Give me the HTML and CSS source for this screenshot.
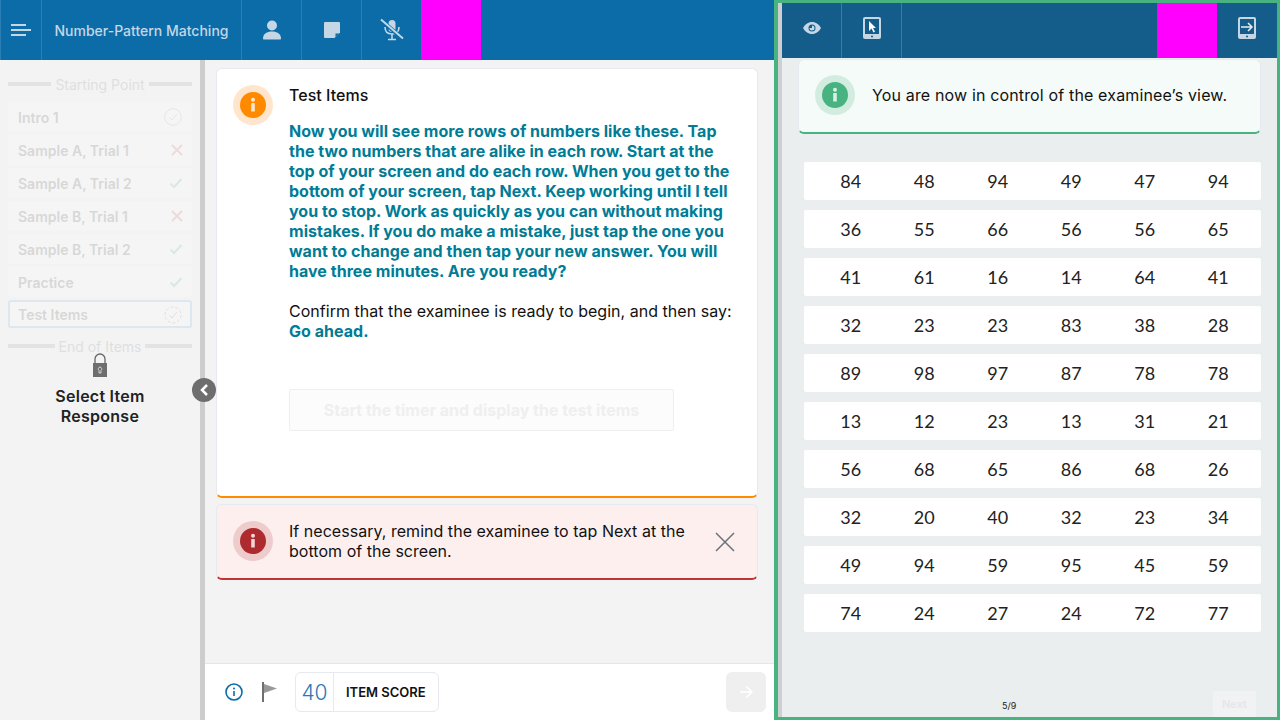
FILE: index.html
```html
<!DOCTYPE html>
<html lang="en">
<head>
  <meta charset="UTF-8">
  <title>Number-Pattern Matching</title>
  <link rel="stylesheet" href="styles.css">
</head>
<body>
  <div class="app">
    <section class="left-pane">
      <header class="topbar">
        <div class="bar-cell menu-cell">
          <svg width="22" height="14" viewBox="0 0 22 14"><path d="M1 2h15M1 7h20M1 12h15" stroke="#c5d6e4" stroke-width="2" fill="none"/></svg>
        </div>
        <div class="bar-cell title-cell">Number-Pattern Matching</div>
        <div class="bar-cell icon-cell">
          <svg width="20" height="20" viewBox="0 0 20 20"><circle cx="10" cy="5.500" r="5" fill="#c5d6e4"/><path d="M1 18.500c0-4.500 4-7 9-7s9 2.500 9 7c0 .6-.4 1-1 1H2c-.6 0-1-.4-1-1z" fill="#c5d6e4"/></svg>
        </div>
        <div class="bar-cell icon-cell">
          <svg width="16" height="16" viewBox="0 0 16 16"><path d="M1 0h14a1 1 0 0 1 1 1v9.500L10.500 16H1a1 1 0 0 1-1-1V1a1 1 0 0 1 1-1z" fill="#c5d6e4"/><path d="M11.500 15v-3.500H15z" fill="#0b6ca8"/></svg>
        </div>
        <div class="bar-cell icon-cell">
          <svg width="26" height="24" viewBox="0 0 26 24"><rect x="9.500" y="2" width="7" height="12" rx="3.500" fill="#c5d6e4"/><path d="M6 9c0 5 3 7 7 7s7-2 7-7M13 16v5M9 21.500h8" stroke="#c5d6e4" stroke-width="1.600" fill="none"/><path d="M2 2l22 19" stroke="#0b6ca8" stroke-width="4"/><path d="M2 1.500l22 19" stroke="#c5d6e4" stroke-width="2"/></svg>
        </div>
        <div class="magenta"></div>
      </header>

      <div class="left-body">
        <aside class="sidebar">
          <div class="items-faded">
            <div class="divider"><span>Starting Point</span></div>
            <div class="item"><span>Intro 1</span>
              <svg width="18" height="18" viewBox="0 0 18 18"><circle cx="9" cy="9" r="8.300" fill="none" stroke="#bbb"/><path d="M5.500 9.500l2.500 2.500 5-6" fill="none" stroke="#bbb"/></svg>
            </div>
            <div class="item"><span>Sample A, Trial 1</span>
              <svg class="mark" width="12" height="12" viewBox="0 0 12 12"><path d="M1 1l10 10M11 1L1 11" stroke="#d98b8b" stroke-width="2"/></svg>
            </div>
            <div class="item"><span>Sample A, Trial 2</span>
              <svg class="mark" width="14" height="12" viewBox="0 0 14 12"><path d="M1.500 6.500l3.500 3.500 7.500-8" fill="none" stroke="#7fc9a8" stroke-width="2"/></svg>
            </div>
            <div class="item"><span>Sample B, Trial 1</span>
              <svg class="mark" width="12" height="12" viewBox="0 0 12 12"><path d="M1 1l10 10M11 1L1 11" stroke="#d98b8b" stroke-width="2"/></svg>
            </div>
            <div class="item"><span>Sample B, Trial 2</span>
              <svg class="mark" width="14" height="12" viewBox="0 0 14 12"><path d="M1.500 6.500l3.500 3.500 7.500-8" fill="none" stroke="#7fc9a8" stroke-width="2"/></svg>
            </div>
            <div class="item"><span>Practice</span>
              <svg class="mark" width="14" height="12" viewBox="0 0 14 12"><path d="M1.500 6.500l3.500 3.500 7.500-8" fill="none" stroke="#7fc9a8" stroke-width="2"/></svg>
            </div>
            <div class="item item-current"><span>Test Items</span>
              <svg width="18" height="18" viewBox="0 0 18 18"><circle cx="9" cy="9" r="8" fill="none" stroke="#999" stroke-dasharray="3 2"/><path d="M5.500 9.500l2.500 2.500 5-6" fill="none" stroke="#999"/></svg>
            </div>
            <div class="divider divider-end"><span>End of Items</span></div>
          </div>
          <div class="lock-block">
            <svg width="16" height="24" viewBox="0 0 16 24"><path d="M3 11V6a5 5 0 0 1 10 0v5" fill="none" stroke="#666" stroke-width="1.300"/><rect x="1" y="10" width="14" height="14" fill="#6e6e6e"/><path d="M8 14a2 2 0 0 1 1 3.500V20H7v-2.500A2 2 0 0 1 8 14z" fill="none" stroke="#eee" stroke-width=".8"/></svg>
            <div class="lock-label">Select Item<br>Response</div>
          </div>
        </aside>
        <div class="splitter">
          <button class="collapse">
            <svg width="10" height="14" viewBox="0 0 10 14"><path d="M8 2L3 7l5 5" fill="none" stroke="#fff" stroke-width="2.500"/></svg>
          </button>
        </div>

        <main class="content">
          <div class="scroll-area">
            <article class="card card-main">
              <div class="badge badge-orange">
                <svg width="26" height="26" viewBox="0 0 26 26"><circle cx="13" cy="13" r="13" fill="#ff8a00"/><circle cx="13" cy="7.800" r="2" fill="#ffe5cc"/><rect x="11.200" y="11" width="3.600" height="8.500" rx=".6" fill="#ffe5cc"/></svg>
              </div>
              <div class="card-text">
                <h3 class="card-title">Test Items</h3>
                <p class="say">Now you will see more rows of numbers like these. Tap the two numbers that are alike in each row. Start at the top of your screen and do each row. When you get to the bottom of your screen, tap Next. Keep working until I tell you to stop. Work as quickly as you can without making mistakes. If you do make a mistake, just tap the one you want to change and then tap your new answer. You will have three minutes. Are you ready?</p>
                <p class="note">Confirm that the examinee is ready to begin, and then say:<br><strong class="say">Go ahead.</strong></p>
                <button class="start-btn">Start the timer and display the test items</button>
              </div>
            </article>
            <article class="card card-alert">
              <div class="badge badge-red">
                <svg width="26" height="26" viewBox="0 0 26 26"><circle cx="13" cy="13" r="13" fill="#ad2b2f"/><circle cx="13" cy="7.800" r="2" fill="#f3d5d5"/><rect x="11.200" y="11" width="3.600" height="8.500" rx=".6" fill="#f3d5d5"/></svg>
              </div>
              <p class="alert-text">If necessary, remind the examinee to tap Next at the bottom of the screen.</p>
              <svg class="close" width="20" height="20" viewBox="0 0 20 20"><path d="M1 1l18 18M19 1L1 19" stroke="#67727a" stroke-width="1.500"/></svg>
            </article>
          </div>
          <footer class="score-bar">
            <svg width="18" height="18" viewBox="0 0 18 18"><circle cx="9" cy="9" r="8" fill="none" stroke="#0b6ca8" stroke-width="1.600"/><path d="M9 8v5" stroke="#0b6ca8" stroke-width="1.600"/><circle cx="9" cy="5.500" r="1" fill="#0b6ca8"/></svg>
            <svg class="flag" width="16" height="20" viewBox="0 0 16 20"><path d="M1 0v20" stroke="#6f6f6f" stroke-width="2"/><path d="M2 2l13 4.500L2 11z" fill="#999"/></svg>
            <div class="score-box"><span class="score-num">40</span><span class="score-label">ITEM SCORE</span></div>
            <button class="next-arrow">
              <svg width="14" height="14" viewBox="0 0 14 14"><path d="M1 7h12M7.500 1.500L13 7l-5.500 5.500" fill="none" stroke="#fff" stroke-width="1.500"/></svg>
            </button>
          </footer>
        </main>
      </div>
    </section>

    <section class="right-pane">
      <header class="topbar topbar-dark">
        <div class="bar-cell dark-cell">
          <svg width="18" height="12" viewBox="0 0 18 12"><path d="M0 6c2-3.500 5-6 9-6s7 2.500 9 6c-2 3.500-5 6-9 6S2 9.500 0 6z" fill="#c5d6e4"/><circle cx="9" cy="6" r="3.500" fill="#145c8a"/><path d="M9 3.500A2.500 2.500 0 1 1 6.500 6H9z" fill="#c5d6e4"/></svg>
        </div>
        <div class="bar-cell dark-cell">
          <svg width="18" height="22" viewBox="0 0 18 22"><rect width="18" height="22" rx="2" fill="#c5d6e4"/><rect x="2" y="2" width="14" height="15" fill="#145c8a"/><path d="M6 4v10l2.500-2.500 2 4 1.500-.8-2-3.700H13z" fill="#fff"/><circle cx="9" cy="19.500" r="1" fill="#145c8a"/></svg>
        </div>
        <div class="bar-spacer"></div>
        <div class="magenta"></div>
        <div class="bar-cell dark-cell icon-last">
          <svg width="18" height="22" viewBox="0 0 18 22"><rect width="18" height="22" rx="2" fill="#c5d6e4"/><rect x="2" y="2" width="14" height="15" fill="#145c8a"/><path d="M3 10h11M10 6l4 4-4 4" fill="none" stroke="#e8eef3" stroke-width="1.500"/><circle cx="9" cy="19.500" r="1" fill="#145c8a"/></svg>
        </div>
      </header>

      <div class="examinee">
        <article class="card card-control">
          <div class="badge badge-green">
            <svg width="26" height="26" viewBox="0 0 26 26"><circle cx="13" cy="13" r="13" fill="#48b281"/><circle cx="13" cy="7.800" r="2" fill="#d9f0e5"/><rect x="11.200" y="11" width="3.600" height="8.500" rx=".6" fill="#d9f0e5"/></svg>
          </div>
          <p class="control-text">You are now in control of the examinee’s view.</p>
        </article>

        <div class="rows">
          <div class="row"><span>84</span><span>48</span><span>94</span><span>49</span><span>47</span><span>94</span></div>
          <div class="row"><span>36</span><span>55</span><span>66</span><span>56</span><span>56</span><span>65</span></div>
          <div class="row"><span>41</span><span>61</span><span>16</span><span>14</span><span>64</span><span>41</span></div>
          <div class="row"><span>32</span><span>23</span><span>23</span><span>83</span><span>38</span><span>28</span></div>
          <div class="row"><span>89</span><span>98</span><span>97</span><span>87</span><span>78</span><span>78</span></div>
          <div class="row"><span>13</span><span>12</span><span>23</span><span>13</span><span>31</span><span>21</span></div>
          <div class="row"><span>56</span><span>68</span><span>65</span><span>86</span><span>68</span><span>26</span></div>
          <div class="row"><span>32</span><span>20</span><span>40</span><span>32</span><span>23</span><span>34</span></div>
          <div class="row"><span>49</span><span>94</span><span>59</span><span>95</span><span>45</span><span>59</span></div>
          <div class="row"><span>74</span><span>24</span><span>27</span><span>24</span><span>72</span><span>77</span></div>
        </div>

        <div class="page-foot">
          <span class="page-count">5/9</span>
          <button class="next-btn">Next</button>
        </div>
      </div>
    </section>
  </div>
</body>
</html>
```

FILE: styles.css
```css
* {
  box-sizing: border-box;
}
html, body {
  margin: 0;
  height: 100%;
  overflow: hidden;
}
body {
  font-family: Inter, "Noto Sans", sans-serif;
  color: #111;
  background: #f3f3f3;
}
p, h3 {
  margin: 0;
}
button {
  font-family: inherit;
  border: 0;
}
.app {
  display: flex;
  width: 1280px;
  height: 720px;
}

/* top bars */
.left-pane {
  width: 774px;
  display: flex;
  flex-direction: column;
}
.topbar {
  display: flex;
  height: 60px;
  flex: none;
  background: #0b6ca8;
}
.bar-cell {
  display: flex;
  align-items: center;
  justify-content: center;
  height: 100%;
  border-left: 1px solid #2a7fb5;
}
.menu-cell {
  width: 41px;
}
.title-cell {
  width: 200px;
  font-size: 14px;
  font-weight: 500;
  color: #c5d6e4;
}
.icon-cell {
  width: 60px;
}
.magenta {
  width: 60px;
  height: 100%;
  background: #ff00ff;
}

.left-body {
  flex: 1;
  display: flex;
  min-height: 0;
}

/* sidebar */
.sidebar {
  width: 200px;
  padding: 16px 8px 0;
}
.items-faded {
  opacity: 0.22;
}
.divider {
  display: flex;
  align-items: center;
  gap: 4px;
  height: 16px;
  margin-bottom: 10px;
  font-size: 14px;
  color: #999;
  white-space: nowrap;
}
.divider::before, .divider::after {
  content: "";
  flex: 1;
  height: 4px;
  background: #a9b4b4;
}
.divider-end {
  margin: 11px 0 0;
  height: 14px;
}
.item {
  display: flex;
  align-items: center;
  justify-content: space-between;
  height: 30px;
  margin-bottom: 3px;
  padding: 0 10px;
  border-radius: 3px;
  background: #fff;
  font-size: 14px;
  font-weight: 600;
  color: #777;
}
.mark {
  margin-right: -1px;
}
.item-current {
  height: 28px;
  margin: 2px 0 0;
  padding: 1px 8px 0;
  border: 2px solid #8ec1e6;
}
.lock-block {
  display: flex;
  flex-direction: column;
  align-items: center;
}
.lock-label {
  margin-top: 9px;
  font-size: 16px;
  font-weight: 600;
  line-height: 20px;
  letter-spacing: 0.25px;
  text-align: center;
  color: #222;
}
.splitter {
  position: relative;
  width: 5px;
  background: #cdcdcd;
}
.collapse {
  position: absolute;
  left: -8px;
  top: 318px;
  display: flex;
  align-items: center;
  justify-content: center;
  width: 24px;
  height: 24px;
  padding: 0;
  border-radius: 50%;
  background: #6e6e6e;
}

/* instruction cards */
.content {
  flex: 1;
  display: flex;
  flex-direction: column;
  min-width: 0;
}
.scroll-area {
  flex: 1;
  padding: 8px 16px 0 11px;
}
.card {
  display: flex;
  background: #fff;
  border: 1px solid #e6e9ef;
  border-bottom-width: 2px;
  border-radius: 6px;
}
.card-main {
  height: 430px;
  padding: 16px 16px 0;
  gap: 16px;
  border-bottom-color: #ff8a00;
}
.badge {
  flex: none;
  display: flex;
  align-items: center;
  justify-content: center;
  width: 40px;
  height: 40px;
  border-radius: 50%;
}
.badge-orange {
  background: #ffe5cc;
}
.badge-red {
  background: #efcccc;
}
.badge-green {
  background: #d2ede0;
}
.card-text {
  flex: 1;
  font-size: 16px;
  line-height: 20px;
  letter-spacing: 0.03px;
}
.card-title {
  font-size: 16px;
  font-weight: 500;
  line-height: 20px;
  color: #111;
}
.say {
  font-weight: 700;
  color: #007c96;
}
.card-text .say:first-of-type {
  margin-top: 16px;
}
.note {
  margin-top: 20px;
  color: #111;
}
.start-btn {
  display: block;
  width: 385px;
  height: 42px;
  margin-top: 48px;
  background: #fcfcfc;
  border: 1px solid #efefef;
  border-radius: 2px;
  font-size: 16px;
  font-weight: 700;
  color: #efefef;
}
.card-alert {
  align-items: center;
  gap: 16px;
  height: 76px;
  margin-top: 6px;
  padding: 0 22px 1px 16px;
  background: #feefef;
  border-bottom-color: #c13434;
}
.alert-text {
  flex: 1;
  font-size: 16px;
  line-height: 20px;
  letter-spacing: 0.03px;
}
.close {
  margin-top: 2px;
}

/* score footer */
.score-bar {
  flex: none;
  display: flex;
  align-items: center;
  height: 57px;
  padding: 0 8px 0 20px;
  background: #fff;
  border-top: 1px solid #e6e6e6;
}
.flag {
  margin-left: 19px;
}
.score-box {
  display: flex;
  align-items: center;
  height: 40px;
  margin-left: 17px;
  border: 1px solid #e6e9ef;
  border-radius: 6px;
}
.score-num {
  display: flex;
  align-items: center;
  justify-content: center;
  width: 38px;
  height: 100%;
  border-right: 1px solid #e6e9ef;
  font-size: 21px;
  font-weight: 300;
  color: #2a78b8;
}
.score-label {
  padding: 0 12px;
  font-size: 13px;
  font-weight: 600;
  color: #111;
}
.next-arrow {
  display: flex;
  align-items: center;
  justify-content: center;
  width: 40px;
  height: 40px;
  margin-left: auto;
  padding: 0;
  border-radius: 6px;
  background: #efefef;
}

/* examinee view */
.right-pane {
  width: 506px;
  display: flex;
  flex-direction: column;
  padding-left: 4px;
  border: 3px solid #48b281;
  border-left-width: 4px;
  background: linear-gradient(to right, #cfcfd1 4px, #ebeeef 4px);
}
.topbar-dark {
  height: 55px;
  background: #145c8a;
}
.dark-cell {
  width: 60px;
  padding-bottom: 5px;
  border-left: 0;
  border-right: 1px solid #2a7fb5;
}
.bar-spacer {
  flex: 1;
}
.icon-last {
  border-right: 0;
}
.examinee {
  flex: 1;
  display: flex;
  flex-direction: column;
  padding: 1px 16px 0;
  min-height: 0;
}
.card-control {
  flex: none;
  align-items: center;
  gap: 17px;
  height: 75px;
  padding: 0 16px 2px;
  background: #f5fbf8;
  border-bottom-color: #48b281;
}
.control-text {
  font-size: 16px;
  letter-spacing: 0.15px;
}
.rows {
  display: flex;
  flex-direction: column;
  gap: 10px;
  margin: 28px 0 0 6px;
}
.row {
  display: grid;
  grid-template-columns: repeat(6, 1fr);
  align-items: center;
  height: 38px;
  padding: 0 6px 0 10px;
  border-radius: 2px;
  background: #fff;
  font-family: Lato, sans-serif;
  font-size: 18px;
  color: #222;
  text-align: center;
}
.page-foot {
  position: relative;
  flex: 1;
}
.page-count {
  position: absolute;
  left: 204px;
  bottom: 6px;
  font-size: 9px;
  color: #222;
}
.next-btn {
  position: absolute;
  right: 5px;
  bottom: 0;
  width: 43px;
  height: 26px;
  background: #f1f2f4;
  border-radius: 2px;
  font-size: 11px;
  font-weight: 600;
  color: #e5e6e8;
}
```
